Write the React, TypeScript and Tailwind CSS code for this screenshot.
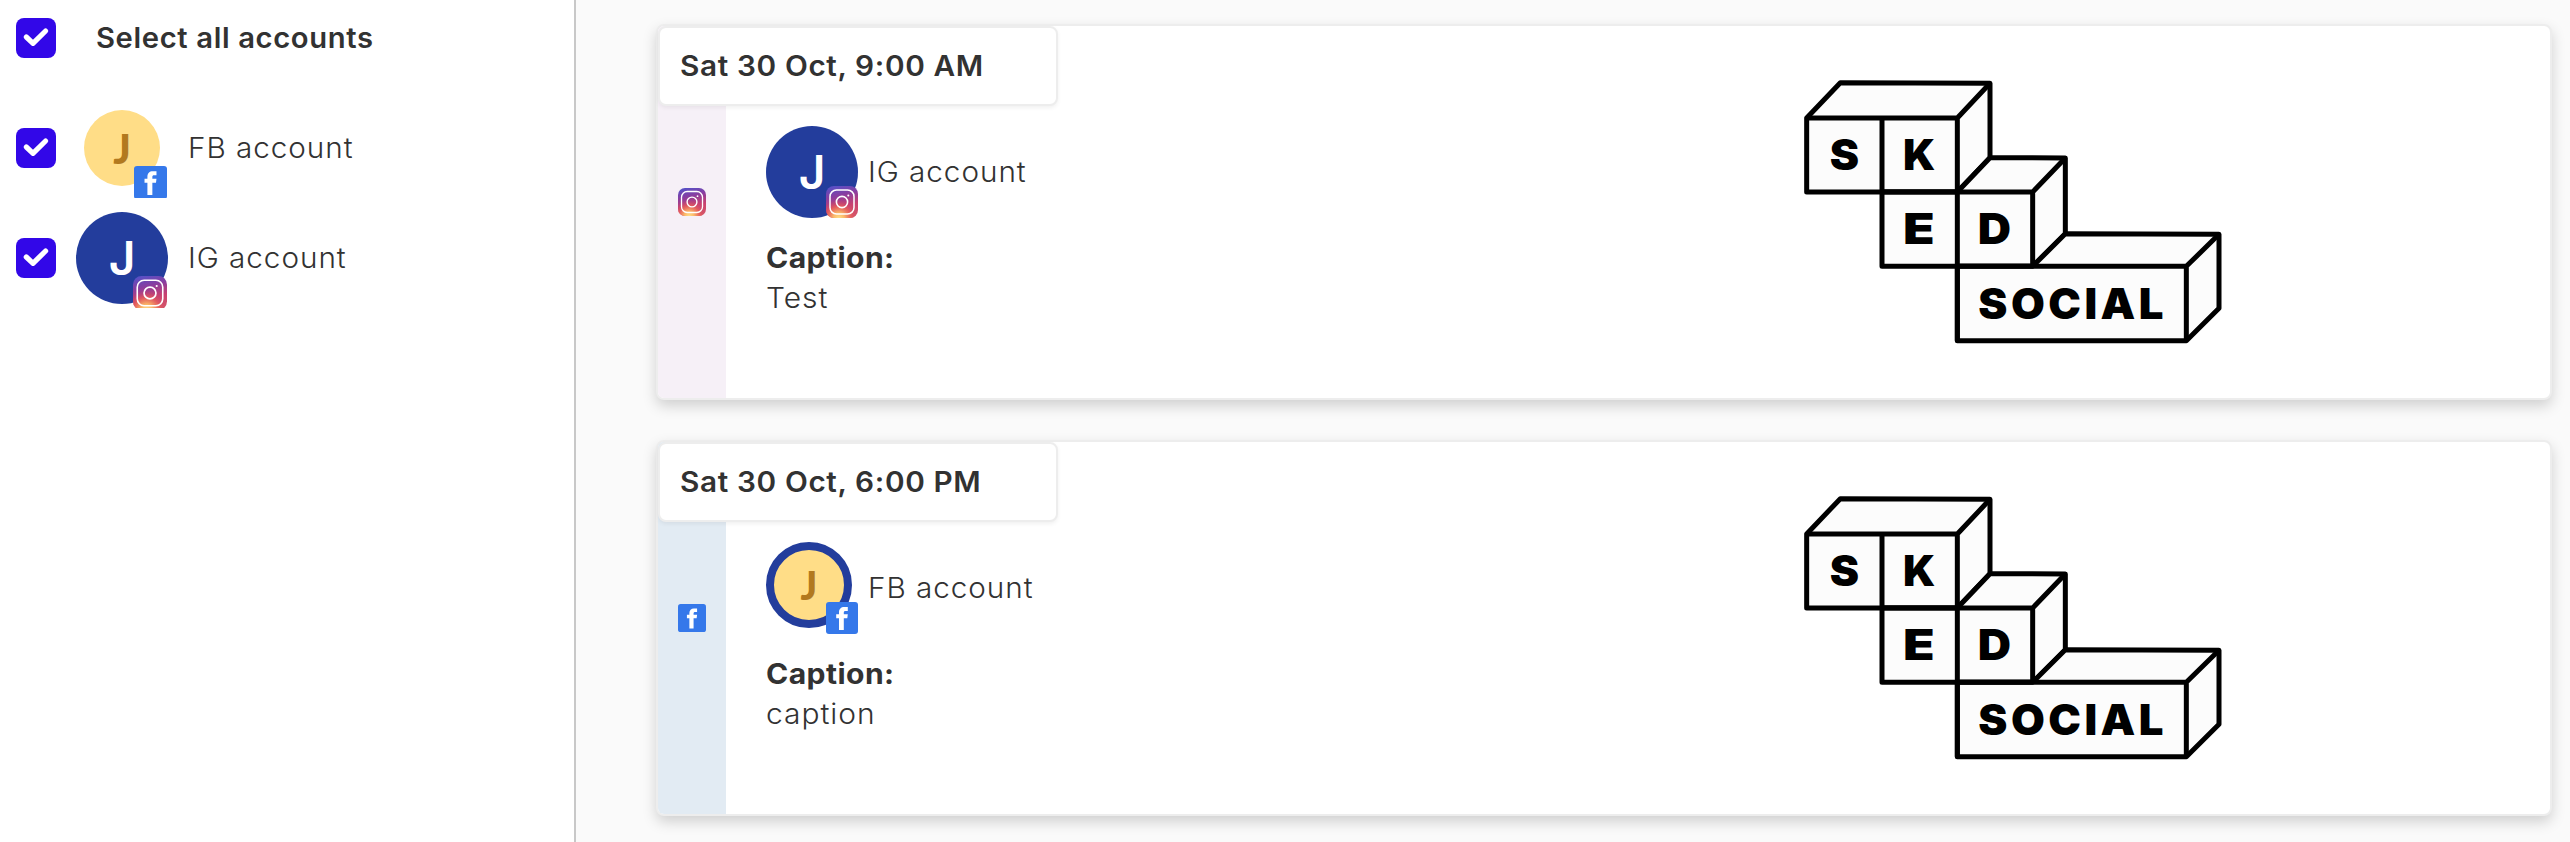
import React from "react";

type Network = "facebook" | "instagram";

function FacebookIcon({ className }: { className: string }) {
  return (
    <svg viewBox="0 0 32 32" className={className}>
      <rect width="32" height="32" rx="3" fill="#3578ea" />
      <path
        d="M13 28V16.300h-2.800v-4H13V10.400c0-3.500 2-5.400 5.200-5.400h3.600v4h-2.200c-1.400 0-1.800.6-1.800 1.800v1.500h4l-.5 4h-3.500V28z"
        fill="#fff"
      />
    </svg>
  );
}

function InstagramIcon({ className, id }: { className: string; id: string }) {
  return (
    <svg viewBox="0 0 32 32" className={className}>
      <defs>
        <linearGradient id={`${id}-base`} x1="0.35" y1="0" x2="0.6" y2="1">
          <stop offset="0" stopColor="#5a4fc4" />
          <stop offset="0.3" stopColor="#8a3d9f" />
          <stop offset="0.65" stopColor="#c9416f" />
          <stop offset="1" stopColor="#d4566a" />
        </linearGradient>
        <radialGradient id={`${id}-glow`} cx="0.4" cy="1.02" r="0.6">
          <stop offset="0" stopColor="#ffe08a" />
          <stop offset="0.3" stopColor="#fbb868" />
          <stop offset="0.65" stopColor="#e8605a" stopOpacity="0.8" />
          <stop offset="1" stopColor="#c9416f" stopOpacity="0" />
        </radialGradient>
      </defs>
      <rect width="32" height="32" rx="8" fill={`url(#${id}-base)`} />
      <rect width="32" height="32" rx="8" fill={`url(#${id}-glow)`} />
      <rect x="4" y="4" width="24" height="24" rx="6.500" fill="none" stroke="#fff" strokeWidth="1.500" />
      <circle cx="16" cy="16" r="5.600" fill="none" stroke="#fff" strokeWidth="1.600" />
      <circle cx="22.300" cy="9.400" r="1" fill="#fff" />
    </svg>
  );
}

function Checkbox() {
  return (
    <span className="flex size-10 shrink-0 items-center justify-center rounded-lg bg-[#3207e8]">
      <svg viewBox="0 0 40 40" className="size-10">
        <path d="M10.300 19L17 25.300L29.600 13" fill="none" stroke="#fff" strokeWidth="5.200" strokeLinecap="round" strokeLinejoin="round" />
      </svg>
    </span>
  );
}

function SkedLogo() {
  return (
    <svg viewBox="0 0 1380 900" className="h-[300px] w-[460px]">
      <g fill="#fcfcfc" stroke="#000" strokeWidth="15" strokeLinejoin="round">
        <path d="M80 174L181 68L630 70L630 293L532 396H80z" />
        <path d="M306 396H532L630 293L856 294V521L758 619H306z" />
        <path d="M532 619H758L856 521L1317 523V745L1219 842H532z" />
        <path d="M80 174H532L630 70M532 174V842M306 174V396M306 396H758L856 294M758 396V619M532 619H1219L1317 523M1219 619V842" fill="none" />
      </g>
      <g className="font-['Inter',sans-serif] font-black" fontSize="126" fill="#000">
        <text x="149" y="330" textLength="88" lengthAdjust="spacingAndGlyphs">S</text>
        <text x="369" y="330" textLength="97" lengthAdjust="spacingAndGlyphs">K</text>
        <text x="369" y="552" textLength="95" lengthAdjust="spacingAndGlyphs">E</text>
        <text x="593" y="552" textLength="100" lengthAdjust="spacingAndGlyphs">D</text>
        <text x="595" y="776" textLength="566" lengthAdjust="spacingAndGlyphs" letterSpacing="10">SOCIAL</text>
      </g>
    </svg>
  );
}

function SidebarRow({ network, name }: { network: Network; name: string }) {
  const fb = network === "facebook";
  return (
    <label className="flex h-[110px] items-center">
      <Checkbox />
      <span className="relative ml-5 flex size-[92px] items-center justify-center">
        {fb ? (
          <span className="flex size-[76px] items-center justify-center rounded-full bg-[#ffdd87] font-['Lato',sans-serif] text-[41px] leading-none font-black text-[#b2791f]">
            <span>J</span>
          </span>
        ) : (
          <span className="flex size-[92px] items-center justify-center rounded-full bg-[#233d9c] font-['Inter',sans-serif] text-[46px] leading-none font-semibold text-white">
            <span>J</span>
          </span>
        )}
        <span className={fb ? "absolute top-[64px] left-[58px] h-8 w-[33px] overflow-hidden" : "absolute top-[64px] left-[57px] h-8 w-[34px] overflow-hidden"}>
          {fb ? <FacebookIcon className="size-[33px]" /> : <InstagramIcon id="side" className="size-[34px]" />}
        </span>
      </span>
      <span className="ml-[20px] origin-left scale-x-[1.06] text-[28px] leading-10 font-light tracking-[0.9px] whitespace-nowrap">{name}</span>
    </label>
  );
}

interface Post {
  network: Network;
  date: string;
  account: string;
  caption: string;
}

function PostCard({ post }: { post: Post }) {
  const fb = post.network === "facebook";
  return (
    <article className="relative flex h-[376px] rounded-lg border-2 border-[#ededed] bg-white shadow-[0_6px_14px_rgba(0,0,0,0.17)]">
      <div className="absolute top-0 left-0 flex h-20 w-[400px] items-center rounded-lg border-2 border-[#ededed] bg-white pl-5 whitespace-nowrap shadow-[0_2px_4px_rgba(0,0,0,0.06)]">
        <span className="origin-left scale-x-[1.062] text-[28px] font-semibold tracking-[0.6px]">{post.date}</span>
      </div>
      <div className={fb ? "flex w-[68px] justify-center rounded-l-md bg-[#e2ebf3] pt-[162px]" : "flex w-[68px] justify-center rounded-l-md bg-[#f6f0f7] pt-[162px]"}>
        {fb ? <FacebookIcon className="size-7" /> : <InstagramIcon id="strip" className="size-7" />}
      </div>
      <div className="w-[1054px] pt-[100px] pl-10">
        <div className="flex h-[92px] items-center">
          <span className="relative size-[92px]">
            {fb ? (
              <span className="flex size-[86px] items-center justify-center rounded-full border-8 border-[#233d9c] bg-[#ffdd87] font-['Lato',sans-serif] text-[39px] leading-none font-black text-[#b2791f]">
                <span>J</span>
              </span>
            ) : (
              <span className="flex size-[92px] items-center justify-center rounded-full bg-[#233d9c] font-['Inter',sans-serif] text-[46px] leading-none font-semibold text-white">
                <span>J</span>
              </span>
            )}
            <span className="absolute top-[60px] left-[60px]">
              {fb ? <FacebookIcon className="size-8" /> : <InstagramIcon id="card" className="size-8" />}
            </span>
          </span>
          <span className="ml-[10px] origin-left scale-x-[1.06] text-[28px] leading-10 font-light tracking-[0.9px] whitespace-nowrap">{post.account}</span>
        </div>
        <div className="mt-[20px] origin-left scale-x-[1.075] text-[28px] leading-10 font-bold tracking-[0.4px]">Caption:</div>
        <div className="origin-left scale-x-[1.07] text-[28px] leading-10 font-light tracking-[0.9px]">{post.caption}</div>
      </div>
      <div className="pt-[34px]">
        <SkedLogo />
      </div>
    </article>
  );
}

const posts: Post[] = [
  { network: "instagram", date: "Sat 30 Oct, 9:00 AM", account: "IG account", caption: "Test" },
  { network: "facebook", date: "Sat 30 Oct, 6:00 PM", account: "FB account", caption: "caption" },
];

export default function App() {
  return (
    <div className="flex h-[842px] w-[2570px] overflow-hidden bg-white font-['Inter',sans-serif] text-[#323232]">
      <aside className="w-[576px] shrink-0 border-r-2 border-[#c8c8c8] pl-4">
        <label className="flex h-[76px] items-center">
          <Checkbox />
          <span className="ml-10 origin-left scale-x-[1.043] text-[28px] leading-10 font-semibold tracking-[0.6px] whitespace-nowrap">Select all accounts</span>
        </label>
        <div className="mt-[17px]">
          <SidebarRow network="facebook" name="FB account" />
          <SidebarRow network="instagram" name="IG account" />
        </div>
      </aside>
      <main className="flex grow flex-col gap-10 bg-[#fafafa] pt-6 pr-[18px] pl-20">
        {posts.map((post) => (
          <PostCard key={post.date} post={post} />
        ))}
      </main>
    </div>
  );
}
